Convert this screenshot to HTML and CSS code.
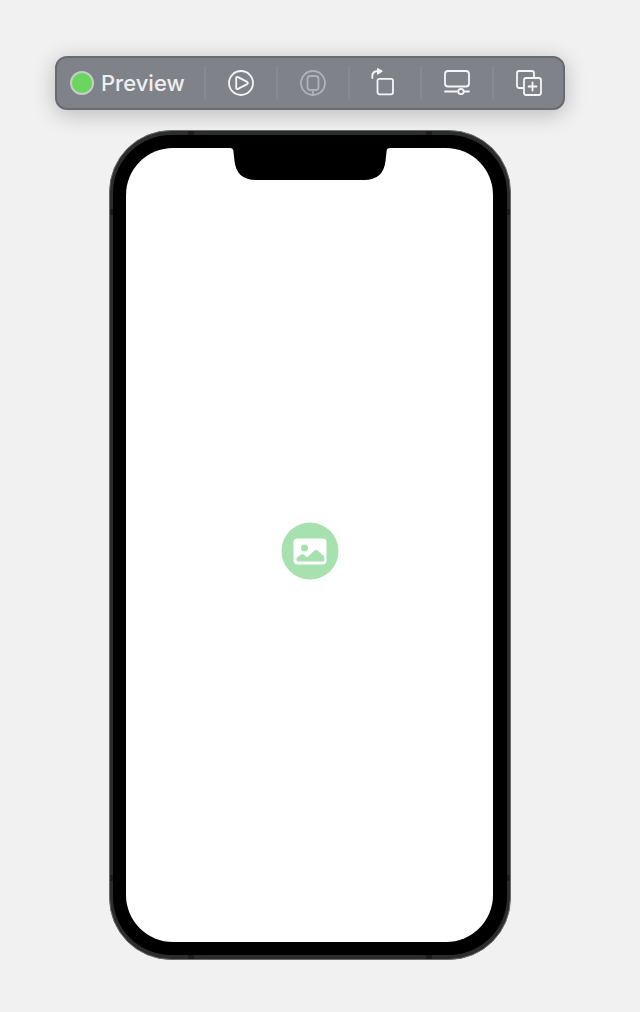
FILE: index.html
```html
<!DOCTYPE html>
<html lang="en">
<head>
<meta charset="utf-8">
<meta name="viewport" content="width=device-width, initial-scale=1">
<title>Preview</title>
<link rel="stylesheet" href="styles.css">
</head>
<body>
<main class="canvas">
  <div class="toolbar" role="toolbar" aria-label="Preview controls">
    <div class="status"><span class="dot"></span><span>Preview</span></div>
    <button class="tool" type="button" aria-label="Live preview">
      <svg class="icon" viewBox="0 0 32 32"><circle cx="16" cy="16" r="12"/><path d="M11.200 11.200v9.600q0 2 1.800 1.100l8.700-4.500q2.400-1.400 0-2.800l-8.700-4.500q-1.800-.9-1.800 1.100z"/></svg>
    </button>
    <button class="tool" type="button" aria-label="Preview on device" disabled>
      <svg class="icon" viewBox="0 0 32 32"><circle cx="16" cy="16" r="12"/><rect x="10.500" y="9" width="11" height="14" rx="2.800"/><path d="M16 23v5"/></svg>
    </button>
    <button class="tool" type="button" aria-label="Rotate">
      <svg class="icon" viewBox="0 0 32 32"><rect x="8.500" y="11.800" width="15.500" height="15.500" rx="2"/><path d="M3.300 11V9.500Q3.300 4 9 4"/><path class="solid" d="M8.800 1.500l4.500 2.700-4.500 2.900z"/></svg>
    </button>
    <button class="tool" type="button" aria-label="Device settings">
      <svg class="icon" viewBox="0 0 32 32"><rect x="4" y="4" width="24" height="15.500" rx="3"/><path d="M4 24.500h13M22.800 24.500h5.200"/><circle cx="20" cy="24.500" r="2.700"/></svg>
    </button>
    <button class="tool" type="button" aria-label="Duplicate preview">
      <svg class="icon" viewBox="0 0 32 32"><path d="M10.500 21H6.200Q4 21 4 18.800V6.200Q4 4 6.200 4h12.600Q21 4 21 6.200V10.500"/><rect x="11" y="11" width="17" height="17" rx="2.200"/><path d="M19.500 15.500v8M15.500 19.500h8"/></svg>
    </button>
  </div>

  <div class="phone">
    <div class="bezel">
      <div class="screen">
        <svg class="notch" viewBox="0 0 160 32" aria-hidden="true"><path d="M0 0Q3.500 0 3.500 4L4.500 13Q6.500 32 26 32H134Q153.500 32 155.500 13L156.500 4Q156.500 0 160 0z"/></svg>
        <svg class="photo" viewBox="0 0 58 58" role="img" aria-label="Photo">
          <circle class="green" cx="29" cy="29" r="28.500"/>
          <rect class="white" x="12.500" y="16.500" width="33" height="26" rx="4"/>
          <circle class="green" cx="23.500" cy="26" r="3.500"/>
          <path class="green" d="M15.500 36l4.500-3.500q1.300-.9 2.600 0l3.600 2.800 7-6.500q1.900-1.500 3.800 0l6.200 5.700v3.700q0 1.300-1.300 1.300H16.800q-1.300 0-1.300-1.300z"/>
        </svg>
      </div>
    </div>
  </div>
</main>
</body>
</html>
```
FILE: styles.css
```css
* {
  box-sizing: border-box;
}

body {
  margin: 0;
  background: #f1f1f1;
  font-family: Inter, "Liberation Sans", sans-serif;
}

.canvas {
  display: flex;
  flex-direction: column;
  align-items: center;
  gap: 20px;
  padding: 56px 20px 52px 0;
}

.toolbar {
  display: flex;
  align-items: center;
  height: 54px;
  border: 2px solid #6a6b70;
  border-radius: 12px;
  background: #80828a;
  box-shadow: 0 4px 22px rgba(0, 0, 0, 0.24);
}

.status {
  display: flex;
  align-items: center;
  gap: 7px;
  width: 147px;
  padding-left: 13px;
  color: #efeff0;
  font-size: 22px;
  font-weight: 500;
  line-height: 28px;
}

.dot {
  width: 24px;
  height: 24px;
  border: 2px solid #c3cfc5;
  border-radius: 50%;
  background: #6bd65f;
}

.tool {
  display: flex;
  align-items: center;
  justify-content: center;
  width: 72px;
  height: 34px;
  padding: 0;
  border: 0;
  border-left: 2px solid #878991;
  background: none;
  color: #f6f6f7;
}

.tool:disabled {
  color: #b1b2b7;
}

.tool:last-child {
  width: 71px;
}

.icon {
  width: 32px;
  height: 32px;
  fill: none;
  stroke: currentColor;
  stroke-width: 1.8;
  stroke-linecap: round;
  stroke-linejoin: round;
}

.icon .solid {
  fill: currentColor;
  stroke-width: 1;
}

.phone {
  width: 402px;
  max-width: 100%;
  aspect-ratio: 402 / 830;
  padding: 4px 3px;
  border: 1px solid #6c6c6c;
  border-radius: 62px;
  background:
    linear-gradient(#1c1c1c, #1c1c1c) 78px 0 / 6px 100% no-repeat,
    linear-gradient(#1c1c1c, #1c1c1c) 316px 0 / 6px 100% no-repeat,
    linear-gradient(#1c1c1c, #1c1c1c) 0 78px / 100% 6px no-repeat,
    linear-gradient(#1c1c1c, #1c1c1c) 0 744px / 100% 6px no-repeat,
    #2b2c2c;
}

.bezel {
  height: 100%;
  padding: 13px 14px 13px 13px;
  border-radius: 58px;
  background: #000;
}

.screen {
  position: relative;
  display: flex;
  align-items: center;
  justify-content: center;
  height: 100%;
  border-radius: 47px;
  background: #fff;
}

.notch {
  position: absolute;
  top: 0;
  left: 50%;
  width: 160px;
  height: 32px;
  margin-left: -80px;
}

.photo {
  width: 58px;
  height: 58px;
  margin-top: 12px;
}

.green {
  fill: #a8e1b0;
}

.white {
  fill: #fff;
}
```
